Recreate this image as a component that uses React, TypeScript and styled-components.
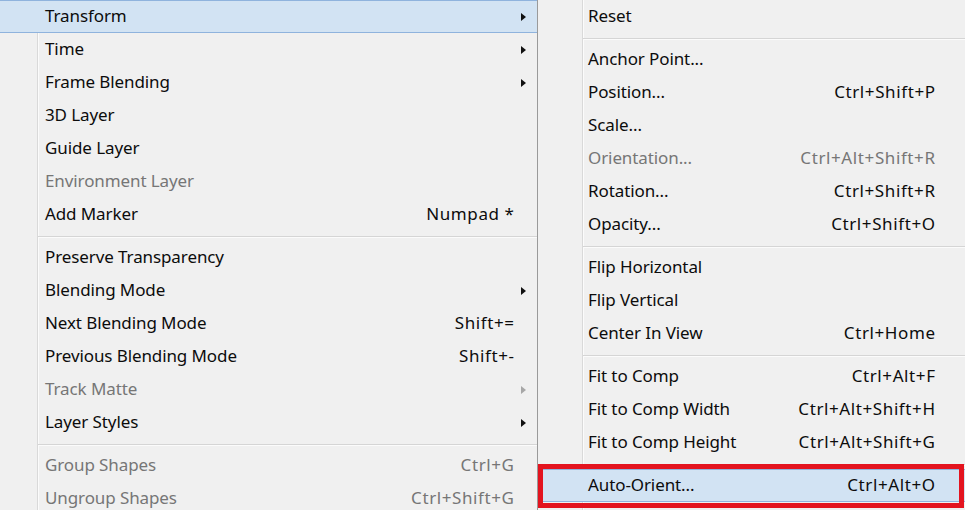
import * as React from 'react';
import styled, { createGlobalStyle } from 'styled-components';

interface Item {
	label?: string;
	shortcut?: string;
	sub?: boolean;
	disabled?: boolean;
	active?: boolean;
	separator?: boolean;
}

const layerItems: Item[] = [
	{ label: 'Transform', sub: true, active: true },
	{ label: 'Time', sub: true },
	{ label: 'Frame Blending', sub: true },
	{ label: '3D Layer' },
	{ label: 'Guide Layer' },
	{ label: 'Environment Layer', disabled: true },
	{ label: 'Add Marker', shortcut: 'Numpad *' },
	{ separator: true },
	{ label: 'Preserve Transparency' },
	{ label: 'Blending Mode', sub: true },
	{ label: 'Next Blending Mode', shortcut: 'Shift+=' },
	{ label: 'Previous Blending Mode', shortcut: 'Shift+-' },
	{ label: 'Track Matte', sub: true, disabled: true },
	{ label: 'Layer Styles', sub: true },
	{ separator: true },
	{ label: 'Group Shapes', shortcut: 'Ctrl+G', disabled: true },
	{ label: 'Ungroup Shapes', shortcut: 'Ctrl+Shift+G', disabled: true },
];

const transformItems: Item[] = [
	{ label: 'Reset' },
	{ separator: true },
	{ label: 'Anchor Point...' },
	{ label: 'Position...', shortcut: 'Ctrl+Shift+P' },
	{ label: 'Scale...' },
	{ label: 'Orientation...', shortcut: 'Ctrl+Alt+Shift+R', disabled: true },
	{ label: 'Rotation...', shortcut: 'Ctrl+Shift+R' },
	{ label: 'Opacity...', shortcut: 'Ctrl+Shift+O' },
	{ separator: true },
	{ label: 'Flip Horizontal' },
	{ label: 'Flip Vertical' },
	{ label: 'Center In View', shortcut: 'Ctrl+Home' },
	{ separator: true },
	{ label: 'Fit to Comp', shortcut: 'Ctrl+Alt+F' },
	{ label: 'Fit to Comp Width', shortcut: 'Ctrl+Alt+Shift+H' },
	{ label: 'Fit to Comp Height', shortcut: 'Ctrl+Alt+Shift+G' },
	{ separator: true },
	{ label: 'Auto-Orient...', shortcut: 'Ctrl+Alt+O', active: true },
];

const GlobalStyle = createGlobalStyle`
	html, body {
		margin: 0;
		padding: 0;
		background: #f0f0f0;
		overflow: hidden;
	}
	body {
		font-family: "Noto Sans", "Open Sans", sans-serif;
	}
`;

const Screen = styled.div`
	display: flex;
	width: 965px;
	height: 510px;
	overflow: hidden;
	background: #f0f0f0;
`;

/* gutter: the thin vertical line left of the labels */
const Menu = styled.div<{ $gutter: number; $width?: number }>`
	position: relative;
	display: flex;
	flex-direction: column;
	flex: ${p => (p.$width ? `0 0 ${p.$width}px` : '1')};
	background:
		linear-gradient(to right,
			transparent ${p => p.$gutter}px,
			#d9d9d9 ${p => p.$gutter}px,
			#d9d9d9 ${p => p.$gutter + 1}px,
			#fbfbfb ${p => p.$gutter + 1}px,
			#fbfbfb ${p => p.$gutter + 2}px,
			transparent ${p => p.$gutter + 2}px),
		#f0f0f0;
	border-right: ${p => (p.$width ? '1px solid #9a9a9a' : 'none')};
`;

const Row = styled.div<{ $indent: number; $right: number; $active?: boolean; $disabled?: boolean }>`
	display: grid;
	grid-template-columns: 1fr auto ${p => p.$right}px;
	align-items: center;
	box-sizing: border-box;
	height: 33px;
	flex: 0 0 33px;
	padding-left: ${p => p.$indent}px;
	font-size: 17px;
	letter-spacing: -0.1px;
	color: ${p => (p.$disabled ? '#767676' : '#0c0c0c')};
	background: ${p => (p.$active ? '#d2e3f3' : 'transparent')};
	border-top: 1px solid ${p => (p.$active ? '#8fb3dd' : 'transparent')};
	border-bottom: 1px solid ${p => (p.$active ? '#8fb3dd' : 'transparent')};
	white-space: nowrap;
`;

const Label = styled.span`
	line-height: 1;
	padding-bottom: 2px;
`;

const Shortcut = styled.span`
	text-align: right;
	line-height: 1;
	padding-bottom: 2px;
	letter-spacing: 0.6px;
	margin-right: -0.6px;
`;

const ArrowCell = styled.span`
	display: flex;
	align-items: center;
	padding-left: 7px;
`;

const Arrow = styled.span<{ $disabled?: boolean }>`
	width: 0;
	height: 0;
	border-top: 4.5px solid transparent;
	border-bottom: 4.5px solid transparent;
	border-left: 5px solid ${p => (p.$disabled ? '#a7a7a7' : '#111')};
`;

const Separator = styled.div<{ $from: number }>`
	flex: 0 0 10px;
	box-sizing: border-box;
	padding: 5px 0 0 ${p => p.$from}px;
	&::after {
		content: '';
		display: block;
		height: 1px;
		background: #d5d5d5;
		border-bottom: 1px solid #fbfbfb;
	}
`;

const Callout = styled.div`
	position: absolute;
	left: 0;
	top: 464px;
	width: 426px;
	height: 44px;
	box-sizing: border-box;
	border: 5px solid #e3141f;
	pointer-events: none;
`;

interface MenuListProps {
	items: Item[];
	indent: number;
	right: number;
	gutter: number;
	arrows?: boolean;
}

const MenuList = ({ items, indent, right, gutter, arrows }: MenuListProps) => (
	<>
		{items.map((item, i) =>
			item.separator ? (
				<Separator key={i} $from={gutter + 1} />
			) : (
				<Row
					key={i}
					$indent={indent}
					$right={right}
					$active={item.active}
					$disabled={item.disabled}
				>
					<Label>{item.label}</Label>
					<Shortcut>{item.shortcut || ''}</Shortcut>
					<ArrowCell>{arrows && item.sub ? <Arrow $disabled={item.disabled} /> : null}</ArrowCell>
				</Row>
			)
		)}
	</>
);

export default function App() {
	return (
		<Screen>
			<GlobalStyle />
			<Menu $gutter={37} $width={537}>
				<MenuList items={layerItems} indent={45} right={23} gutter={37} arrows />
			</Menu>
			<Menu $gutter={44}>
				<MenuList items={transformItems} indent={50} right={30} gutter={44} />
				<Callout />
			</Menu>
		</Screen>
	);
}
